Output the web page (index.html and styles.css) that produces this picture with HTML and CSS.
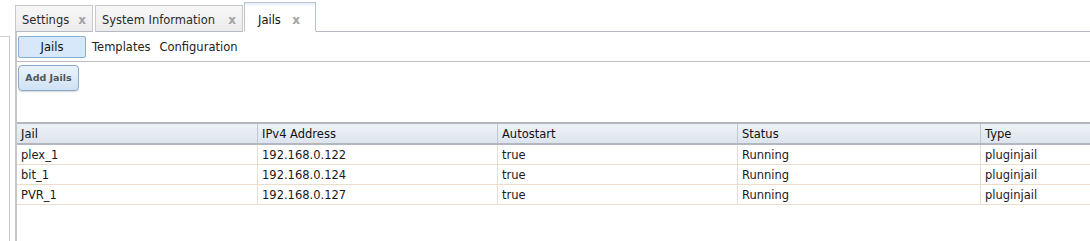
FILE: index.html
```html
<!DOCTYPE html>
<html>
<head>
<meta charset="utf-8">
<link rel="stylesheet" href="styles.css">
</head>
<body>
<div class="page">
  <div class="stub"></div>
  <div class="main">
    <div class="tabbar">
      <div class="tab"><span class="tab-label">Settings</span><span class="tab-close">x</span></div>
      <div class="tab"><span class="tab-label">System Information</span><span class="tab-close">x</span></div>
      <div class="tab active"><span class="tab-label">Jails</span><span class="tab-close">x</span></div>
      <div class="tab-fill"></div>
    </div>
    <div class="content">
      <div class="subnav">
        <span class="subbtn">Jails</span>
        <span class="sublink">Templates</span>
        <span class="sublink">Configuration</span>
      </div>
      <div class="toolbar">
        <span class="addbtn">Add Jails</span>
      </div>
      <table class="grid">
        <thead>
          <tr><th class="c1">Jail</th><th class="c2">IPv4 Address</th><th class="c3">Autostart</th><th class="c4">Status</th><th class="c5">Type</th></tr>
        </thead>
        <tbody>
          <tr><td>plex_1</td><td>192.168.0.122</td><td>true</td><td>Running</td><td>pluginjail</td></tr>
          <tr><td>bit_1</td><td>192.168.0.124</td><td>true</td><td>Running</td><td>pluginjail</td></tr>
          <tr><td>PVR_1</td><td>192.168.0.127</td><td>true</td><td>Running</td><td>pluginjail</td></tr>
        </tbody>
      </table>
    </div>
  </div>
</div>
</body>
</html>
```
FILE: styles.css
```css
html, body {
  margin: 0;
  padding: 0;
  background: #ffffff;
}
body {
  font-family: "DejaVu Sans", Verdana, sans-serif;
  font-size: 11px;
  color: #1a1a1a;
  width: 1090px;
  height: 241px;
  overflow: hidden;
}
.page {
  display: flex;
  height: 241px;
}
.stub {
  width: 9px;
  margin-top: 36px;
  border-top: 1px solid #d0d0d0;
  border-right: 1px solid #c8c8c8;
  flex: none;
}
.main {
  margin-left: 5px;
  flex: 1;
  display: flex;
  flex-direction: column;
  min-width: 0;
  overflow: hidden;
}
.tabbar {
  display: flex;
  align-items: flex-end;
  height: 32px;
  flex: none;
}
.tab {
  display: flex;
  align-items: center;
  height: 27px;
  box-sizing: border-box;
  border: 1px solid #c9c9c9;
  border-bottom: 1px solid #b5b9c4;
  background: linear-gradient(#f7f7f7, #ececec);
  padding: 3px 6px 0 6px;
  margin-right: 2px;
  color: #2a2a2a;
  font-size: 11.5px;
  white-space: nowrap;
  flex: none;
}
.tab .tab-label {
  flex: 1;
}
.tab-close {
  font-weight: bold;
  color: #a3a3a3;
  font-size: 12px;
  margin-left: 8px;
}
.tab:nth-child(1) { width: 78px; }
.tab:nth-child(2) { width: 148px; margin-right: 1px; }
.tab.active {
  width: 72px;
  height: 30px;
  background: linear-gradient(#e4edf7 0, #ffffff 4px, #ffffff);
  border-color: #b8c2d0;
  border-bottom: 1px solid #ffffff;
  padding-left: 13px;
  padding-right: 15px;
  padding-top: 5px;
  margin-right: 0;
}
.tab.active .tab-label { color: #111; }
.tab-fill {
  flex: 1;
  border-bottom: 1px solid #b5b9c4;
}
.content {
  flex: 1;
  border-left: 2px solid #c6c6c6;
  display: flex;
  flex-direction: column;
}
.subnav {
  display: flex;
  align-items: center;
  height: 29px;
  border-bottom: 1px solid #b9bcc2;
  padding-left: 1px;
  flex: none;
}
.subbtn {
  width: 66px;
  height: 20px;
  line-height: 20px;
  text-align: center;
  background: #d6e8fa;
  border: 1px solid #86aed6;
  border-radius: 2px;
  color: #111;
  font-size: 11.5px;
  margin-right: 6px;
}
.sublink {
  font-size: 11.5px;
  color: #222;
  margin-right: 9px;
}
.toolbar {
  height: 60px;
  padding: 3px 0 0 1px;
  box-sizing: border-box;
  flex: none;
}
.addbtn {
  display: inline-block;
  width: 61px;
  height: 26px;
  line-height: 24px;
  box-sizing: border-box;
  text-align: center;
  font-size: 9.5px;
  font-weight: bold;
  color: #555;
  border: 1px solid #88a8c8;
  border-radius: 4px;
  background: linear-gradient(#eaf3fc, #cfe2f5);
  box-shadow: 0 1px 1px rgba(0,0,0,0.15);
}
.grid {
  border-collapse: collapse;
  table-layout: fixed;
  width: 1200px;
  font-size: 11.5px;
}
.grid th {
  height: 19px;
  text-align: left;
  font-weight: normal;
  padding: 0 0 0 4px;
  color: #111;
  background: linear-gradient(#eef2f7, #dce4ed);
  border-top: 2px solid #b3b8c0;
  border-bottom: 2px solid #b3b8c0;
  border-left: 1px solid #c3c8d0;
}
.grid th:first-child { border-left: none; }
.grid td {
  height: 19px;
  padding: 0 0 0 4px;
  border-bottom: 1px solid #ecdccb;
  border-left: 1px solid #ecdccb;
  white-space: nowrap;
}
.grid td:first-child { border-left: none; }
.c1 { width: 236px; }
.c2 { width: 235px; }
.c3 { width: 235px; }
.c4 { width: 238px; }
.c5 { width: 236px; }
```
